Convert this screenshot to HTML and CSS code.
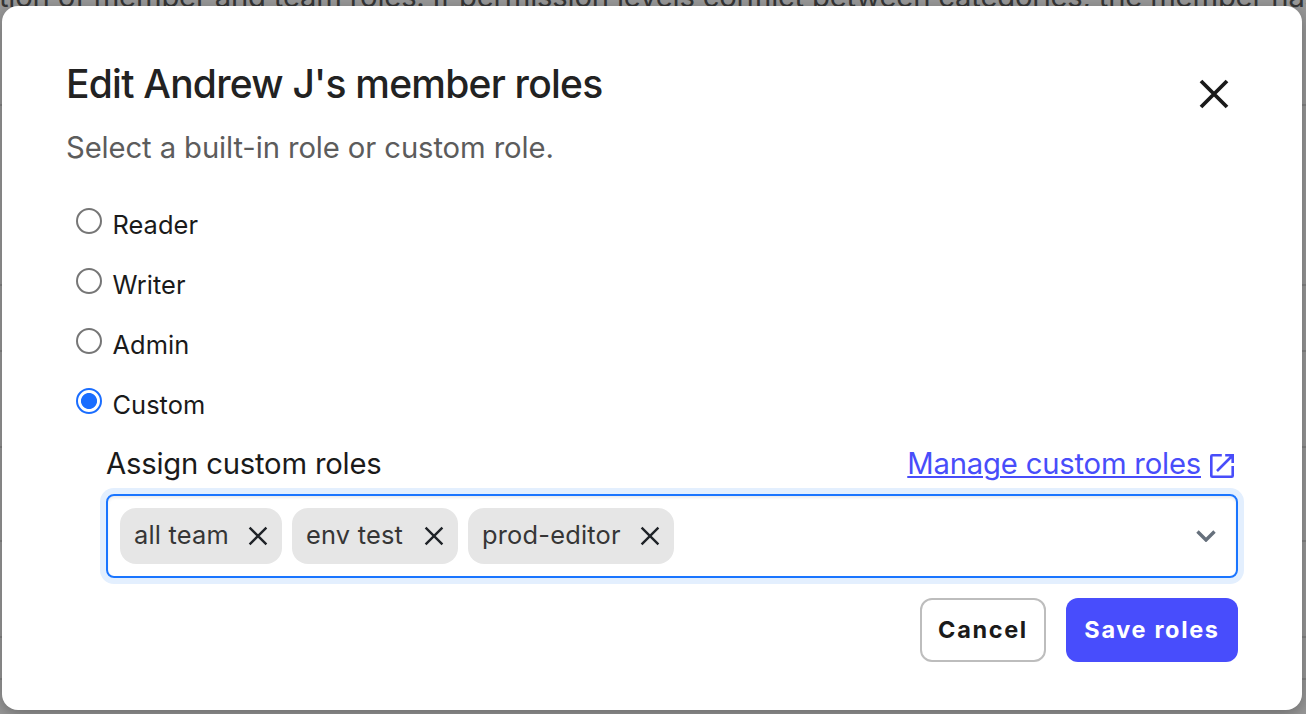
FILE: index.html
```html
<!DOCTYPE html>
<html lang="en">
<head>
<meta charset="utf-8">
<title>Edit member roles</title>
<link rel="stylesheet" href="styles.css">
</head>
<body>
<div class="page">
  <p class="page-text">tion of member and team roles. If permission levels conflict between categories, the member has</p>
  <i class="rule rule-1"></i><i class="rule rule-2"></i><i class="rule rule-3"></i><i class="rule rule-4"></i><i class="rule rule-5"></i><i class="rule rule-6"></i><i class="rule rule-7"></i>
</div>
<main class="dialog" role="dialog" aria-labelledby="title">
  <header class="head">
    <div class="heading">
      <h1 class="title" id="title">Edit Andrew J's member roles</h1>
      <p class="subtitle">Select a built-in role or custom role.</p>
    </div>
    <button class="close" aria-label="Close"><svg width="32" height="32" viewBox="0 0 32 32"><path d="M3 3L29 29M29 3L3 29"/></svg></button>
  </header>
  <div class="options">
    <label class="option"><i class="radio"></i><span>Reader</span></label>
    <label class="option"><i class="radio"></i><span>Writer</span></label>
    <label class="option"><i class="radio"></i><span>Admin</span></label>
    <label class="option"><i class="radio checked"></i><span>Custom</span></label>
  </div>
  <section class="assign">
    <div class="assign-head">
      <span class="assign-label">Assign custom roles</span>
      <a class="manage"><span class="manage-text">Manage custom roles</span><svg width="24" height="24" viewBox="0 0 24 24"><path d="M11.800 1.300H2.300Q1.300 1.300 1.300 2.300V21.700Q1.300 22.700 2.300 22.700H21.700Q22.700 22.700 22.700 21.700V12M15.200 1.300H22.700V9M22.500 1.500L7 17"/></svg></a>
    </div>
    <div class="select">
      <div class="tags">
        <span class="tag tag-a"><span>all team</span><svg width="20" height="20" viewBox="0 0 20 20"><path d="M1.600 1.600L18.400 18.400M18.400 1.600L1.600 18.400"/></svg></span>
        <span class="tag tag-b"><span>env test</span><svg width="20" height="20" viewBox="0 0 20 20"><path d="M1.600 1.600L18.400 18.400M18.400 1.600L1.600 18.400"/></svg></span>
        <span class="tag tag-c"><span>prod-editor</span><svg width="20" height="20" viewBox="0 0 20 20"><path d="M1.600 1.600L18.400 18.400M18.400 1.600L1.600 18.400"/></svg></span>
      </div>
      <svg class="chevron" width="20" height="12" viewBox="0 0 20 12"><path d="M1.500 1.500L10 10L18.500 1.500"/></svg>
    </div>
  </section>
  <footer class="actions">
    <button class="btn btn-cancel">Cancel</button>
    <button class="btn btn-save">Save roles</button>
  </footer>
</main>
</body>
</html>
```
FILE: styles.css
```css
* { box-sizing: border-box; margin: 0; padding: 0; }
body {
  width: 1306px; height: 714px; overflow: hidden; position: relative;
  padding: 6px 4px 4px 2px;
  background: #999;
  font-family: Inter, "Liberation Sans", sans-serif;
  color: #1a1a1a;
}
button { font: inherit; background: none; border: 0; }
svg { display: block; fill: none; }

/* dimmed page behind the dialog */
.page { position: absolute; inset: 0; overflow: hidden; }
.page-text {
  position: absolute; left: -1px; top: -21px;
  font-size: 29.25px; line-height: 36px; letter-spacing: -0.2px; white-space: nowrap; color: #363636;
}
.rule { position: absolute; left: 0; width: 100%; height: 2px; background: #858585; }
.rule-1 { top: 104px; } .rule-2 { top: 284px; } .rule-3 { top: 350px; } .rule-4 { top: 446px; }
.rule-5 { top: 540px; } .rule-6 { top: 636px; } .rule-7 { top: 678px; }

.dialog {
  position: relative; width: 1300px; height: 704px;
  padding: 54px 64px 0; border-radius: 16px; background: #fff;
  box-shadow: 0 4px 16px rgba(0, 0, 0, .3);
}
.head { display: flex; justify-content: space-between; }
.title { font-size: 39px; font-weight: 500; line-height: 48px; letter-spacing: -0.77px; color: #222; }
.subtitle { margin-top: 22px; font-size: 29.25px; line-height: 36px; letter-spacing: -0.11px; color: #5c5c5c; }
.close { width: 32px; height: 32px; margin: 18px 8px 0 0; }
.close path { stroke: #1a1a1a; stroke-width: 3.8; }

.options { display: grid; grid-auto-rows: 60px; margin-top: 29px; padding-left: 10px; }
.option { display: flex; align-items: flex-start; gap: 10.5px; font-size: 25.4px; line-height: 60px; letter-spacing: 0.05px; }
.radio { width: 26px; height: 26px; margin-top: 13px; border: 2px solid #767676; border-radius: 50%; }
.radio.checked {
  border-color: #1a6dff;
  background: radial-gradient(circle, #1a6dff 7.6px, transparent 8.4px);
}

.assign { padding-left: 40px; margin-top: 11px; }
.assign-head { display: flex; justify-content: space-between; height: 48px; font-size: 29.25px; line-height: 36px; }
.assign-label { letter-spacing: -0.2px; }
.manage { display: flex; gap: 9px; padding-right: 4px; color: #484dfa; letter-spacing: -0.2px; }
.manage-text { text-decoration: underline; text-decoration-thickness: 2px; text-underline-offset: 2px; }
.manage svg { margin-top: 8px; }
.manage path { stroke: #484dfa; stroke-width: 2.6; }

.select {
  display: flex; justify-content: space-between; align-items: center;
  height: 84px; padding: 0 20px 0 12px;
  border: 2px solid #1a75ff; border-radius: 8px;
  box-shadow: 0 0 0 6px #e3effe, inset 0 2px 3px rgba(0, 0, 0, .08);
}
.tags { display: flex; gap: 10px; }
.tag {
  display: flex; justify-content: space-between; align-items: center;
  height: 56px; padding: 0 14px; border-radius: 16px; background: #e6e6e6;
  font-size: 25.4px; line-height: 54px; color: #363636; letter-spacing: 0.2px; white-space: nowrap;
}
.tag span { margin-bottom: 2px; }
.tag-a { width: 162px; } .tag-b { width: 166px; } .tag-c { width: 206px; }
.tag path { stroke: #1f2328; stroke-width: 2.4; }
.chevron path { stroke: #66707c; stroke-width: 3.4; }

.actions { display: flex; justify-content: flex-end; gap: 20px; margin-top: 20px; }
.btn { height: 64px; padding-bottom: 1px; border-radius: 12px; font-size: 23.5px; font-weight: 700; letter-spacing: 1.65px; white-space: nowrap; }
.btn-cancel { width: 126px; border: 2px solid #bdbdbd; color: #1a1a1a; }
.btn-save { width: 172px; background: #484dfc; color: #fff; }
```
